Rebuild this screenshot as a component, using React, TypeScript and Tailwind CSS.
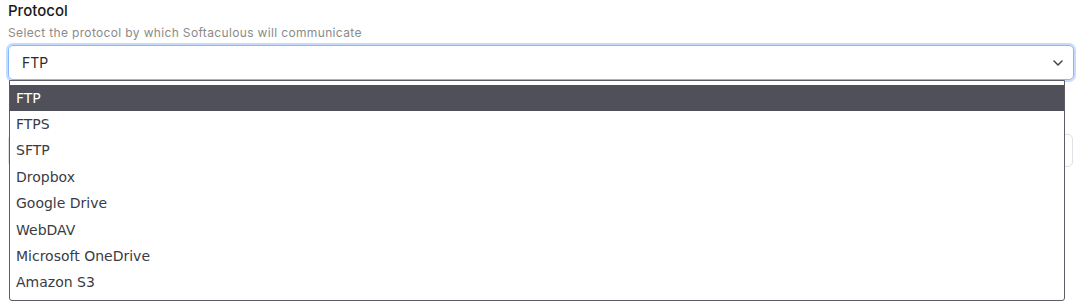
const options = ['FTP', 'FTPS', 'SFTP', 'Dropbox', 'Google Drive', 'WebDAV', 'Microsoft OneDrive', 'Amazon S3'];

export default function App() {
  return (
    <div className="w-[1082px] h-[305px] bg-white overflow-hidden font-['Inter',sans-serif]">
      <div className="pl-2 pr-2">
        <label className="block text-[15px] leading-[22px] font-medium text-[#1b1b1b]">Protocol</label>
        <p className="mt-[2px] text-[12px] leading-[18px] tracking-[0.35px] text-[#8a8a8a]">Select the protocol by which Softaculous will communicate</p>

        {/* select with open list */}
        <div className="relative mt-[3px] w-[1066px]">
          <div className="h-[35px] flex items-center justify-between pl-[13px] pr-[10px] border border-[#86b7fe] rounded-[5px] shadow-[0_0_0_2px_#c5dcfd] text-[14px] text-[#2b2b2b]">
            <span>FTP</span>
            <svg width="10" height="6" viewBox="0 0 10 6" fill="none" stroke="#444" strokeWidth="1.5" strokeLinecap="round" strokeLinejoin="round">
              <path d="M1 1l4 4 4-4" />
            </svg>
          </div>

          <ul className="absolute left-[1px] top-[35px] w-[1056px] h-[221px] pt-[4px] bg-white border border-[#5c5c66] rounded-b-[3px] font-['DejaVu_Sans',sans-serif] text-[14px] text-[#3b3b44]">
            {options.map((o, i) => (
              <li
                key={o}
                className={
                  i === 0
                    ? 'h-[26.4px] flex items-center pl-[6px] bg-[#50505a] text-white'
                    : 'h-[26.4px] flex items-center pl-[6px]'
                }
              >
                {o}
              </li>
            ))}
          </ul>
        </div>

        {/* next field, mostly hidden by the list */}
        <div className="mt-[54px] w-[1065px] h-[33px] border border-[#dee2e6] rounded-[5px]" />
      </div>
    </div>
  );
}
